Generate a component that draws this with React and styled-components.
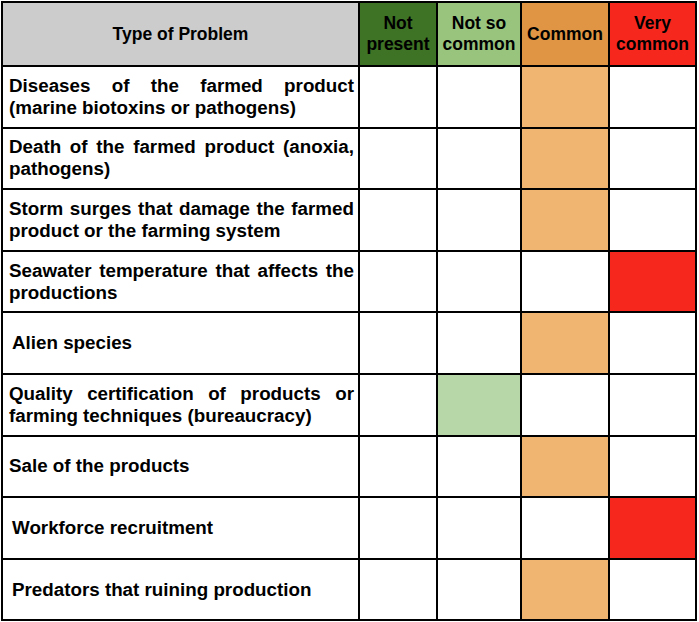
import React from 'react'
import styled, { createGlobalStyle } from 'styled-components'

const rows = [
  { label: 'Diseases of the farmed product (marine biotoxins or pathogens)', mark: 2 },
  { label: 'Death of the farmed product (anoxia, pathogens)', mark: 2 },
  { label: 'Storm surges that damage the farmed product or the farming system', mark: 2 },
  { label: 'Seawater temperature that affects the productions', mark: 3 },
  { label: 'Alien species', mark: 2, indent: true },
  { label: 'Quality certification of products or farming techniques (bureaucracy)', mark: 1 },
  { label: 'Sale of the products', mark: 2 },
  { label: 'Workforce recruitment', mark: 3, indent: true },
  { label: 'Predators that ruining production', mark: 2, indent: true },
]

const heads = [
  { text: ['Not', 'present'], bg: '#3e7224' },
  { text: ['Not so', 'common'], bg: '#98c47e' },
  { text: ['Common'], bg: '#df9543' },
  { text: ['Very', 'common'], bg: '#f6281e' },
]

const widths = [357, 78, 84, 88, 87]
const fills = ['#ffffff', '#b7d7a8', '#efb571', '#f6281e']

function App() {
  return (
    <>
      <GlobalStyle />
      <Table>
        <colgroup>
          {widths.map((w, i) => <Col key={i} $w={w} />)}
        </colgroup>
        <thead>
          <tr>
            <TitleCell>Type of Problem</TitleCell>
            {heads.map((h, i) => (
              <HeadCell key={i} $bg={h.bg}>
                {h.text.map((t, j) => <HeadLine key={j}>{t}</HeadLine>)}
              </HeadCell>
            ))}
          </tr>
        </thead>
        <tbody>
          {rows.map((r, i) => (
            <Row key={i}>
              <Label $indent={r.indent}>{r.label}</Label>
              {[0, 1, 2, 3].map(c => (
                <Mark key={c} $bg={c === r.mark ? fills[c] : '#ffffff'} />
              ))}
            </Row>
          ))}
        </tbody>
      </Table>
    </>
  )
}

export default App

const GlobalStyle = createGlobalStyle`
  body {
    margin: 0;
    background: #ffffff;
    font-family: "Liberation Sans", Arial, sans-serif;
  }
`;

const Table = styled.table`
  margin: 1px 0 0 1px;
  border-collapse: collapse;
  table-layout: fixed;
  width: 696px;
  color: #000000;
  font-weight: bold;
`;

const Col = styled.col`
  width: ${p => p.$w}px;
`;

const TitleCell = styled.th`
  height: 62px;
  border: 2px solid #000000;
  background: #cccccc;
  font-size: 17.5px;
  font-weight: bold;
  text-align: center;
  vertical-align: middle;
  padding: 0;
`;

const HeadCell = styled.th`
  border: 2px solid #000000;
  background: ${p => p.$bg};
  font-size: 17.5px;
  font-weight: bold;
  text-align: center;
  vertical-align: middle;
  padding: 0;
`;

const HeadLine = styled.div`
  line-height: 21px;
`;

const Row = styled.tr`
  height: 61.6px;
`;

const Label = styled.td`
  border: 2px solid #000000;
  padding: 0 4px 0 ${p => (p.$indent ? '9px' : '6px')};
  font-size: 18.8px;
  text-align: justify;
  line-height: 22px;
  vertical-align: middle;
`;

const Mark = styled.td`
  border: 2px solid #000000;
  background: ${p => p.$bg};
  padding: 0;
`;
